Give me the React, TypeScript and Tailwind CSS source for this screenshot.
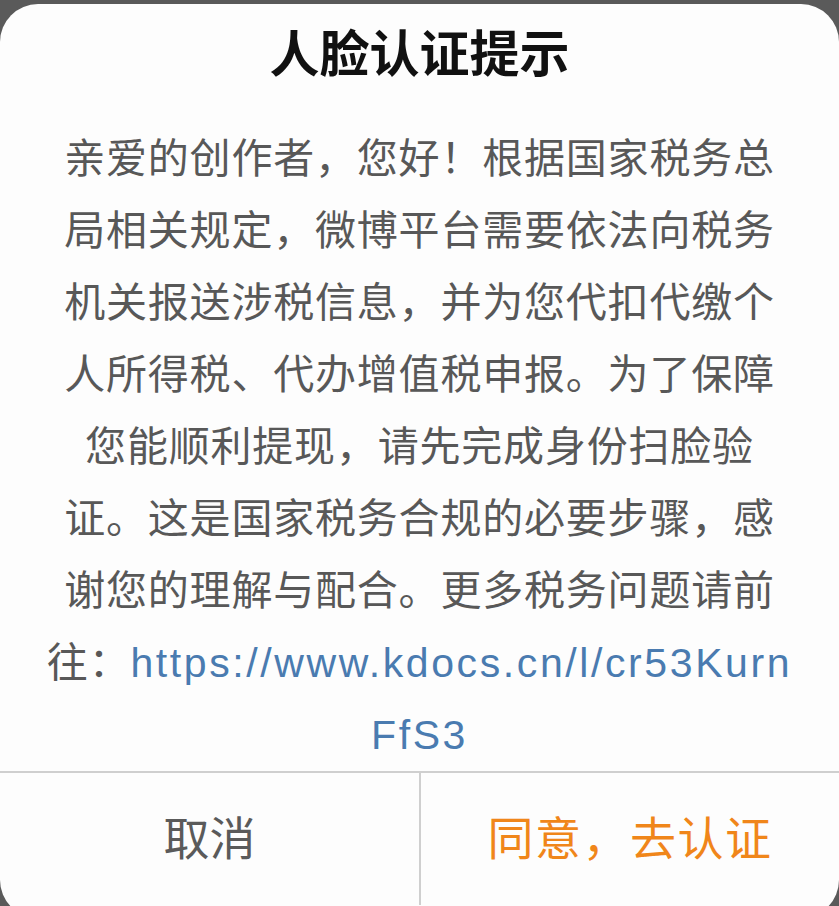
import React from "react"

const lines = [
    "亲爱的创作者，您好！根据国家税务总",
    "局相关规定，微博平台需要依法向税务",
    "机关报送涉税信息，并为您代扣代缴个",
    "人所得税、代办增值税申报。为了保障",
    "您能顺利提现，请先完成身份扫脸验",
    "证。这是国家税务合规的必要步骤，感",
    "谢您的理解与配合。更多税务问题请前",
]

export default function App() {
    return (
        <div
            className="h-[906px] w-[839px] overflow-hidden bg-[#5a5a5a] pt-[4px]"
            style={{ fontFamily: '"Liberation Sans", "Noto Sans CJK SC", sans-serif' }}
        >
            <div className="flex h-[914px] flex-col overflow-hidden rounded-[38px] bg-[#fdfdfd]">
                {/* Title */}
                <div className="pt-[16px] text-center text-[50px] font-bold leading-[70px] text-[#111]">
                    人脸认证提示
                </div>

                {/* Body */}
                <div className="mt-[33px] flex flex-col items-center text-[41px] leading-[72px] tracking-[0.8px] text-[#585858]">
                    {lines.map((l) => (
                        <div key={l} className="whitespace-nowrap">{l}</div>
                    ))}
                    <div className="whitespace-nowrap">
                        往：<span className="tracking-[2.6px] text-[#4a7bb0]">https://www.kdocs.cn/l/cr53Kurn</span>
                    </div>
                    <div className="whitespace-nowrap tracking-[2.6px] text-[#4a7bb0]">FfS3</div>
                </div>

                {/* Buttons */}
                <div className="flex flex-1 border-t-2 border-[#cfcfcf]">
                    <button className="flex h-[132px] w-[421px] items-center justify-center border-r-2 border-[#cfcfcf] text-[46px] text-[#5a5a5a]">
                        取消
                    </button>
                    <button className="flex h-[132px] flex-1 items-center justify-center text-[46px] tracking-[1.5px] text-[#f0861a]">
                        同意，去认证
                    </button>
                </div>
            </div>
        </div>
    )
}
